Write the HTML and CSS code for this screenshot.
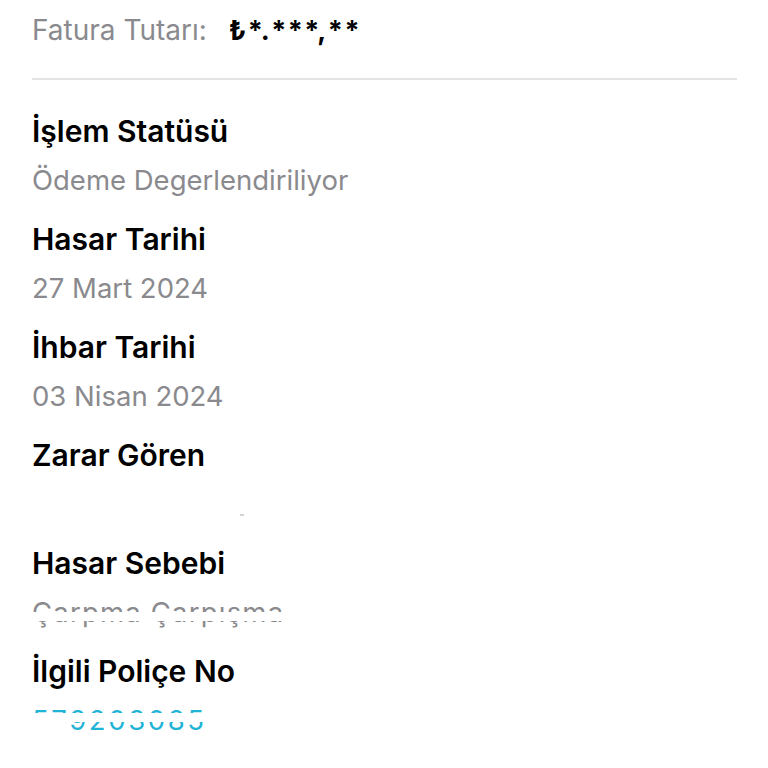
FILE: index.html
```html
<!DOCTYPE html>
<html lang="tr">
<head>
  <meta charset="UTF-8">
  <meta name="viewport" content="width=device-width, initial-scale=1.0">
  <link rel="stylesheet" href="styles.css">
</head>
<body>
  <div class="summary">
    <span class="summary-label">Fatura Tutarı:</span>
    <span class="summary-amount">₺*.***,**</span>
  </div>

  <div class="details">
    <div class="field">
      <div class="label">İşlem Statüsü</div>
      <div class="value">Ödeme Degerlendiriliyor</div>
    </div>
    <div class="field">
      <div class="label">Hasar Tarihi</div>
      <div class="value">27 Mart 2024</div>
    </div>
    <div class="field">
      <div class="label">İhbar Tarihi</div>
      <div class="value">03 Nisan 2024</div>
    </div>
    <div class="field">
      <div class="label">Zarar Gören</div>
      <div class="value"><span class="speck"></span></div>
    </div>
    <div class="field">
      <div class="label">Hasar Sebebi</div>
      <div class="value masked cause">Çarpma Çarpışma<span class="mask mask-cause"></span></div>
    </div>
    <div class="field">
      <div class="label">İlgili Poliçe No</div>
      <div class="value link masked">579203085<span class="mask mask-policy"></span><span class="mask mask-policy-left"></span></div>
    </div>
  </div>
</body>
</html>
```

FILE: styles.css
```css
body {
  margin: 0;
  background: #fff;
  font-family: Inter, "Noto Sans", sans-serif;
  color: #000;
}

.summary {
  display: flex;
  align-items: baseline;
  gap: 22px;
  margin: 0 31px 0 32px;
  height: 80px;
  line-height: 60px;
  border-bottom: 2px solid #e4e4e6;
  box-sizing: border-box;
}

.summary-label {
  font-size: 28px;
  color: #8a8a8e;
}

.summary-amount {
  font-size: 27px;
  font-weight: 700;
  letter-spacing: 1.5px;
}

.details {
  padding: 27px 32px 0;
}

.field {
  margin-bottom: 10px;
}

.label {
  font-size: 30px;
  font-weight: 600;
  line-height: 49px;
}

.value {
  font-size: 27.5px;
  line-height: 49px;
  height: 49px;
  color: #8a8a8e;
  white-space: nowrap;
}

.value.cause {
  letter-spacing: 1.2px;
}

.value.link {
  color: #1fb3d6;
  letter-spacing: 2.6px;
}

.masked {
  position: relative;
  display: inline-block;
}

.mask {
  position: absolute;
  background: #fff;
}

.mask-cause {
  left: 0;
  right: -6px;
  top: 24px;
  height: 9px;
}

.mask-policy {
  left: 0;
  right: -4px;
  top: 17px;
  height: 9px;
}

.mask-policy-left {
  left: 0;
  width: 38px;
  top: 17px;
  height: 30px;
}

.speck {
  display: inline-block;
  width: 4px;
  height: 2px;
  margin-left: 208px;
  background: #d4d4d6;
  vertical-align: -2px;
}
```
